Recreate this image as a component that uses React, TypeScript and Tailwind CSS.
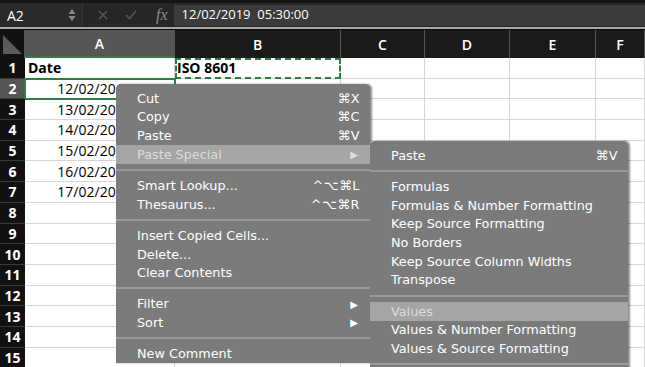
import { Fragment } from 'react'

const cols = [
  { label: 'A', w: 'w-[150px]' },
  { label: 'B', w: 'w-[166px]' },
  { label: 'C', w: 'w-[84px]' },
  { label: 'D', w: 'w-[85px]' },
  { label: 'E', w: 'w-[86px]' },
  { label: 'F', w: 'flex-1' },
]

const dates = ['12/02/2019 05:30', '13/02/2019 05:30', '14/02/2019 05:30', '15/02/2019 05:30', '16/02/2019 05:30', '17/02/2019 05:30']

type Item = { label?: string; key?: string; arrow?: boolean; active?: boolean; sep?: boolean }

const mainMenu: Item[] = [
  { label: 'Cut', key: '⌘X' },
  { label: 'Copy', key: '⌘C' },
  { label: 'Paste', key: '⌘V' },
  { label: 'Paste Special', arrow: true, active: true },
  { sep: true },
  { label: 'Smart Lookup...', key: '^⌥⌘L' },
  { label: 'Thesaurus...', key: '^⌥⌘R' },
  { sep: true },
  { label: 'Insert Copied Cells...' },
  { label: 'Delete...' },
  { label: 'Clear Contents' },
  { sep: true },
  { label: 'Filter', arrow: true },
  { label: 'Sort', arrow: true },
  { sep: true },
  { label: 'New Comment' },
]

const subMenu: Item[] = [
  { label: 'Paste', key: '⌘V' },
  { sep: true },
  { label: 'Formulas' },
  { label: 'Formulas & Number Formatting' },
  { label: 'Keep Source Formatting' },
  { label: 'No Borders' },
  { label: 'Keep Source Column Widths' },
  { label: 'Transpose' },
  { sep: true },
  { label: 'Values', active: true },
  { label: 'Values & Number Formatting' },
  { label: 'Values & Source Formatting' },
  { sep: true },
]

function Menu({ items, className }: { items: Item[]; className: string }) {
  return (
    <div
      className={`absolute rounded-t-[5px] bg-[#7b7b7b] pt-[5px] shadow-[2px_0_2px_rgba(0,0,0,0.45)] ${className}`}
      style={{ fontFamily: '"DejaVu Sans", sans-serif' }}
    >
      {items.map((it, i) =>
        it.sep ? (
          <div key={i} className="flex h-[12.5px] items-center">
            <div className="h-[2px] w-full bg-[#9a9a9a]" />
          </div>
        ) : (
          <div
            key={i}
            className={`flex h-[18.7px] items-center pr-[10px] pl-[21px] text-[12.8px] ${
              it.active ? 'bg-[#a5a5a5] text-[#dcdcdc]' : 'text-white'
            }`}
          >
            <span className="flex-1 whitespace-nowrap">{it.label}</span>
            {it.key && <span className="tracking-[0.5px]">{it.key}</span>}
            {it.arrow && <span className="mr-[2px] text-[10px]">▶</span>}
          </div>
        ),
      )}
    </div>
  )
}

export default function App() {
  return (
    <div className="relative h-[367px] w-[645px] overflow-hidden bg-white" style={{ fontFamily: '"Open Sans", sans-serif' }}>
      {/* Formula bar */}
      <div className="flex h-[27px] items-center border-t-[3px] border-[#151515] bg-[#2a2a2a] text-[13px] text-white">
        <div className="flex w-[82px] items-center justify-between pr-[6px] pl-[7px]">
          <span className="text-[14px]">A2</span>
          <svg width="8" height="14" viewBox="0 0 8 14">
            <path d="M4 1 L7.5 6 L0.5 6 Z" fill="#8a8a8a" />
            <path d="M4 13 L7.5 8 L0.5 8 Z" fill="#8a8a8a" />
          </svg>
        </div>
        <div className="flex h-full items-center border-l border-[#333] bg-[#262626] pl-[15px]">
          <svg width="10" height="10" viewBox="0 0 10 10" className="mr-[17px]">
            <path d="M1 1 L9 9 M9 1 L1 9" stroke="#555" strokeWidth="1.6" />
          </svg>
          <svg width="12" height="10" viewBox="0 0 12 10" className="mr-[19px]">
            <path d="M1 5 L4.5 8.5 L11 1" stroke="#555" strokeWidth="1.6" fill="none" />
          </svg>
          <span className="mr-[6px] text-[16px] text-[#8a8a8a] italic" style={{ fontFamily: '"Liberation Serif", serif' }}>
            fx
          </span>
        </div>
        <div className="flex h-[21px] flex-1 items-center bg-[#3b3b3b] pl-[8px]">12/02/2019&nbsp; 05:30:00</div>
      </div>
      <div className="h-[2px] bg-[#a8a8a8]" />

      {/* Column headers */}
      <div className="flex h-[29px] border-t border-[#0e0e0e] bg-[#1a1a1a] text-[14px] font-semibold text-white">
        <div className="relative w-[25px] border-r border-[#555] bg-[#111]">
          <div className="absolute right-[2px] bottom-[4px] h-0 w-0 border-t-[19px] border-l-[19px] border-t-transparent border-l-[#5a5a5a]" />
        </div>
        {cols.map((c) => (
          <div
            key={c.label}
            className={`${c.w} flex shrink-0 items-center justify-center border-r border-[#555] ${
              c.label === 'A' ? 'border-b-2 border-b-[#2e7d46] bg-[#555]' : ''
            }`}
          >
            {c.label}
          </div>
        ))}
      </div>

      {/* Rows */}
      {Array.from({ length: 15 }, (_, r) => (
        <div key={r} className="flex h-[20.7px]">
          <div
            className={`flex w-[25px] shrink-0 items-center justify-center border-b border-[#3a3a3a] text-[14px] font-bold text-white ${
              r === 1 ? 'bg-[#555]' : 'bg-[#111]'
            }`}
          >
            {r + 1}
          </div>
          {cols.map((c, ci) => {
            let content: React.ReactNode = null
            let extra = ''
            if (r === 0 && ci === 0) content = <span className="pl-[3px] font-bold">Date</span>
            if (r === 0 && ci === 1) {
              content = <span className="pl-[2px] font-bold">ISO 8601</span>
              extra = 'outline-2 outline-dashed outline-[#2e7d46] -outline-offset-2'
            }
            if (r >= 1 && r <= 6 && ci === 0) content = <span className="ml-auto pr-[3px]">{dates[r - 1]}</span>
            if (r === 1 && ci === 0) extra = 'outline-2 outline-[#2e7d46] -outline-offset-1'
            return (
              <Fragment key={c.label}>
                <div
                  className={`${c.w} flex shrink-0 items-center overflow-hidden border-r border-b border-[#d6d6d6] text-[14px] whitespace-nowrap text-black ${extra}`}
                >
                  {content}
                </div>
              </Fragment>
            )
          })}
        </div>
      ))}

      <Menu items={mainMenu} className="top-[84px] left-[116px] w-[254px]" />
      <Menu items={subMenu} className="top-[141px] left-[370px] w-[258px]" />
    </div>
  )
}
